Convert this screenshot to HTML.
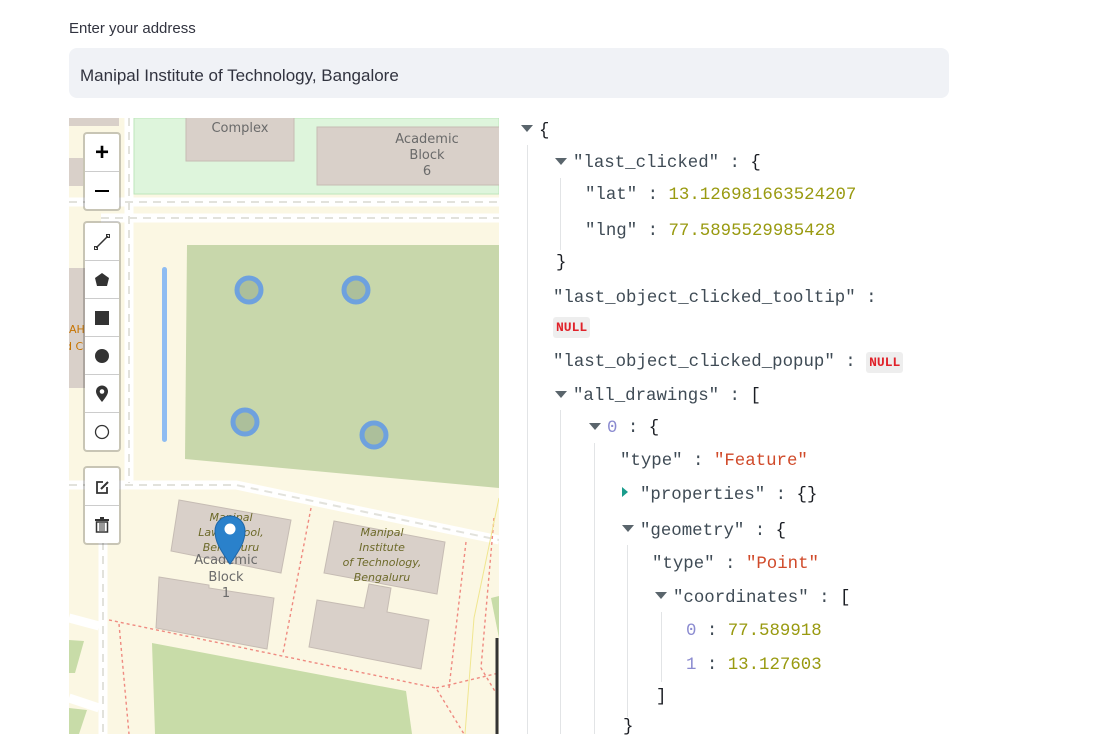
<!DOCTYPE html>
<html><head><meta charset="utf-8"><style>
body{margin:0;width:1093px;height:734px;background:#fff;overflow:hidden;position:relative;font-family:"Liberation Sans",sans-serif}
.lbl{position:absolute;left:69px;top:20px;font-size:15px;color:#31333f}
.inp{position:absolute;left:69px;top:48px;width:880px;height:50px;background:#f0f2f6;border-radius:8px;box-sizing:border-box;padding-left:11px;padding-top:3px;line-height:50px;font-size:17px;color:#31333f}
.map{position:absolute;left:69px;top:118px;width:430px;height:616px;overflow:hidden;background:#fbf7e3}
.j{position:absolute;font-family:"Liberation Mono",monospace;font-size:17.4px;line-height:22px;color:#3f4b55;white-space:pre}
.n{color:#999a10}.s{color:#d04a2a}.i{color:#8b8bd0}.b{color:#1b1e24}
.null{font-family:"Liberation Mono",monospace;font-weight:bold;font-size:13px;color:#e0222a;background:#eeeeee;border-radius:3px;padding:3px 3px}
.tri{position:absolute;width:0;height:0;border-left:6px solid transparent;border-right:6px solid transparent;border-top:7px solid #5a656c}
.tr{position:absolute;width:0;height:0;border-top:5px solid transparent;border-bottom:5px solid transparent;border-left:6px solid #1a9c8c}
.g{position:absolute;width:1px;background:#e2e4e6}
.ctl{position:absolute;left:14px;width:38px;background:#fff;border:2px solid rgba(0,0,0,0.2);border-radius:4px;box-sizing:border-box;background-clip:padding-box}
.ctl div{height:37px;border-bottom:1px solid #ccc;display:flex;align-items:center;justify-content:center}
.ctl div:last-child{border-bottom:none}
</style></head><body>
<div class="lbl">Enter your address</div>
<div class="inp">Manipal Institute of Technology, Bangalore</div>

<div class="map">
<svg width="430" height="616" viewBox="0 0 430 616" style="position:absolute;left:0;top:0">
<rect x="0" y="0" width="430" height="616" fill="#fbf7e3"/>
<rect x="65" y="0" width="365" height="76" fill="#def5dc" stroke="#bde6bb"/>
<rect x="117" y="-2" width="108" height="45" fill="#d9d0c9" stroke="#c6bcb4"/>
<rect x="248" y="9" width="184" height="58" fill="#d9d0c9" stroke="#c6bcb4"/>
<rect x="0" y="0" width="50" height="8" fill="#d9d0c9"/>
<rect x="0" y="40" width="14" height="28" fill="#d9d0c9"/>
<rect x="0" y="150" width="20" height="120" fill="#d9d0c9"/>
<polygon points="118,127 430,127 430,370 116,341" fill="#c8d7ab"/>
<polygon points="83,525 337,573 343,616 86,616" fill="#c8dca8"/>
<polygon points="0,522 15,523 6,555 0,555" fill="#c8dca8"/>
<polygon points="0,590 18,592 10,616 0,616" fill="#c8dca8"/>
<polygon points="422,480 430,478 430,520" fill="#c8dca8"/>
<g fill="none" stroke="#fff" stroke-width="9"><path d="M0,84 H430"/><path d="M32,100 H430"/><path d="M0,367 H167 L430,422"/><path d="M60,0 V365"/><path d="M34,424 V616"/><path d="M0,500 L30,508"/><path d="M0,580 L30,590"/></g>
<g fill="none" stroke="#e2e2dc" stroke-width="2" stroke-dasharray="8 6"><path d="M0,84 H430"/><path d="M32,100 H430"/><path d="M0,367 H167 L430,422"/><path d="M60,0 V365"/><path d="M34,424 V616"/></g>
<polygon points="110,382 222,402 212,455 102,433" fill="#d9d0c9" stroke="#c6bcb4"/>
<polygon points="90,459 140,467 140,470 205,480 198,531 87,510" fill="#d9d0c9" stroke="#c6bcb4"/>
<polygon points="265,403 376,424 368,476 255,455" fill="#d9d0c9" stroke="#c6bcb4"/>
<polygon points="248,482 295,490 300,466 322,470 318,494 360,502 352,551 240,529" fill="#d9d0c9" stroke="#c6bcb4"/>
<g fill="none" stroke="#ef8a80" stroke-width="1.4" stroke-dasharray="3 3"><path d="M40,502 L367,570 L395,616"/><path d="M50,506 L60,616"/><path d="M242,390 L214,535"/><path d="M397,424 L380,570"/><path d="M425,400 L412,550 L430,580"/><path d="M367,570 L430,555"/></g>
<path d="M430,380 L405,500 L396,616" stroke="#f0e690" fill="none"/>
<rect x="93" y="149" width="5" height="175" rx="2.5" fill="#8ebcf2"/>
<g fill="#8fa78c" fill-opacity="0.5" stroke="#6ea1de" stroke-width="5"><circle cx="180" cy="172" r="12"/><circle cx="287" cy="172" r="12"/><circle cx="176" cy="304" r="12"/><circle cx="305" cy="317" r="12"/></g>
<g font-family="DejaVu Sans,sans-serif" font-size="13" fill="#6a6a6a" text-anchor="middle"><text x="171" y="14">Complex</text><text x="358" y="25">Academic</text><text x="358" y="41">Block</text><text x="358" y="57">6</text><text x="157" y="446">Academic</text><text x="157" y="463">Block</text><text x="157" y="479">1</text></g>
<g font-family="DejaVu Sans,sans-serif" font-size="11" font-style="italic" fill="#6d6a2a" text-anchor="middle"><text x="162" y="403">Manipal</text><text x="162" y="418">Law School,</text><text x="162" y="433">Bengaluru</text><text x="313" y="418">Manipal</text><text x="313" y="433">Institute</text><text x="313" y="448">of Technology,</text><text x="313" y="463">Bengaluru</text></g>
<text x="0" y="215" font-family="DejaVu Sans" font-size="11" fill="#c77400">AH</text><text x="-4" y="232" font-family="DejaVu Sans" font-size="11" fill="#c77400">d C</text>
<path d="M161,446 C150,430 146,423 146,413 A15,15 0 0 1 176,413 C176,423 172,430 161,446Z" fill="#2a81cb" stroke="#2067a8"/>
<circle cx="161" cy="411" r="5.5" fill="#fff"/>
<line x1="428" y1="520" x2="428" y2="616" stroke="#333" stroke-width="3"/>
</svg>
<div class="ctl" style="top:14px"><div style="font-size:24px;font-weight:bold">+</div><div><span style="width:14px;height:2px;background:#000;display:block"></span></div></div>
<div class="ctl" style="top:103px">
<div><svg width="18" height="18"><path d="M3,15 L15,3" stroke="#333" stroke-width="1.5"/><rect x="1.5" y="13.5" width="3" height="3" fill="none" stroke="#333"/><rect x="13.5" y="1.5" width="3" height="3" fill="none" stroke="#333"/></svg></div>
<div><svg width="16" height="16"><polygon points="8,1 15,6 13,14 3,14 1,6" fill="#333"/></svg></div>
<div><svg width="14" height="14"><rect x="0" y="0" width="14" height="14" fill="#333"/></svg></div>
<div><svg width="16" height="16"><circle cx="8" cy="8" r="7" fill="#333"/></svg></div>
<div><svg width="14" height="18"><path d="M7,17 C3,12 1,9 1,6.5 A6,6 0 0 1 13,6.5 C13,9 11,12 7,17Z" fill="#333"/><circle cx="7" cy="6.5" r="2.3" fill="#fff"/></svg></div>
<div><svg width="16" height="16"><circle cx="8" cy="8" r="6.5" fill="none" stroke="#333" stroke-width="1.3"/></svg></div>
</div>
<div class="ctl" style="top:348px">
<div><svg width="16" height="16"><path d="M9,3 H3 V14 H13 V8" fill="none" stroke="#333" stroke-width="1.8"/><path d="M7,10 L14,3" stroke="#333" stroke-width="2"/></svg></div>
<div><svg width="14" height="16"><rect x="0" y="2" width="14" height="2" fill="#333"/><rect x="5" y="0" width="4" height="2" fill="#333"/><rect x="1.5" y="5" width="11" height="10" fill="none" stroke="#333" stroke-width="1.5"/><path d="M5,6 V14 M7,6 V14 M9,6 V14" stroke="#333"/></svg></div>
</div>
</div>

<div class="g" style="left:527px;top:145px;height:589px"></div>
<div class="g" style="left:560px;top:178px;height:72px"></div>
<div class="g" style="left:560px;top:410px;height:324px"></div>
<div class="g" style="left:594px;top:443px;height:291px"></div>
<div class="g" style="left:627px;top:545px;height:172px"></div>
<div class="g" style="left:661px;top:612px;height:70px"></div>

<div class="tri" style="left:521px;top:125px"></div><div class="j b" style="left:539px;top:121px">{</div>
<div class="tri" style="left:555px;top:158px"></div><div class="j" style="left:573px;top:153px">"last_clicked" : <span class="b">{</span></div>
<div class="j" style="left:585px;top:185px">"lat" : <span class="n">13.126981663524207</span></div>
<div class="j" style="left:585px;top:221px">"lng" : <span class="n">77.5895529985428</span></div>
<div class="j b" style="left:556px;top:253px">}</div>
<div class="j" style="left:553px;top:288px">"last_object_clicked_tooltip" :</div>
<div style="position:absolute;left:553px;top:318px"><span class="null">NULL</span></div>
<div class="j" style="left:553px;top:352px">"last_object_clicked_popup" : <span class="null">NULL</span></div>
<div class="tri" style="left:555px;top:391px"></div><div class="j" style="left:573px;top:386px">"all_drawings" : <span class="b">[</span></div>
<div class="tri" style="left:589px;top:423px"></div><div class="j" style="left:607px;top:418px"><span class="i">0</span> : <span class="b">{</span></div>
<div class="j" style="left:620px;top:451px">"type" : <span class="s">"Feature"</span></div>
<div class="tr" style="left:622px;top:487px"></div><div class="j" style="left:640px;top:485px">"properties" : <span class="b">{}</span></div>
<div class="tri" style="left:622px;top:525px"></div><div class="j" style="left:640px;top:521px">"geometry" : <span class="b">{</span></div>
<div class="j" style="left:652px;top:554px">"type" : <span class="s">"Point"</span></div>
<div class="tri" style="left:655px;top:592px"></div><div class="j" style="left:673px;top:588px">"coordinates" : <span class="b">[</span></div>
<div class="j" style="left:686px;top:621px"><span class="i">0</span> : <span class="n">77.589918</span></div>
<div class="j" style="left:686px;top:655px"><span class="i">1</span> : <span class="n">13.127603</span></div>
<div class="j b" style="left:656px;top:687px">]</div>
<div class="j b" style="left:623px;top:717px">}</div>
</body></html>
